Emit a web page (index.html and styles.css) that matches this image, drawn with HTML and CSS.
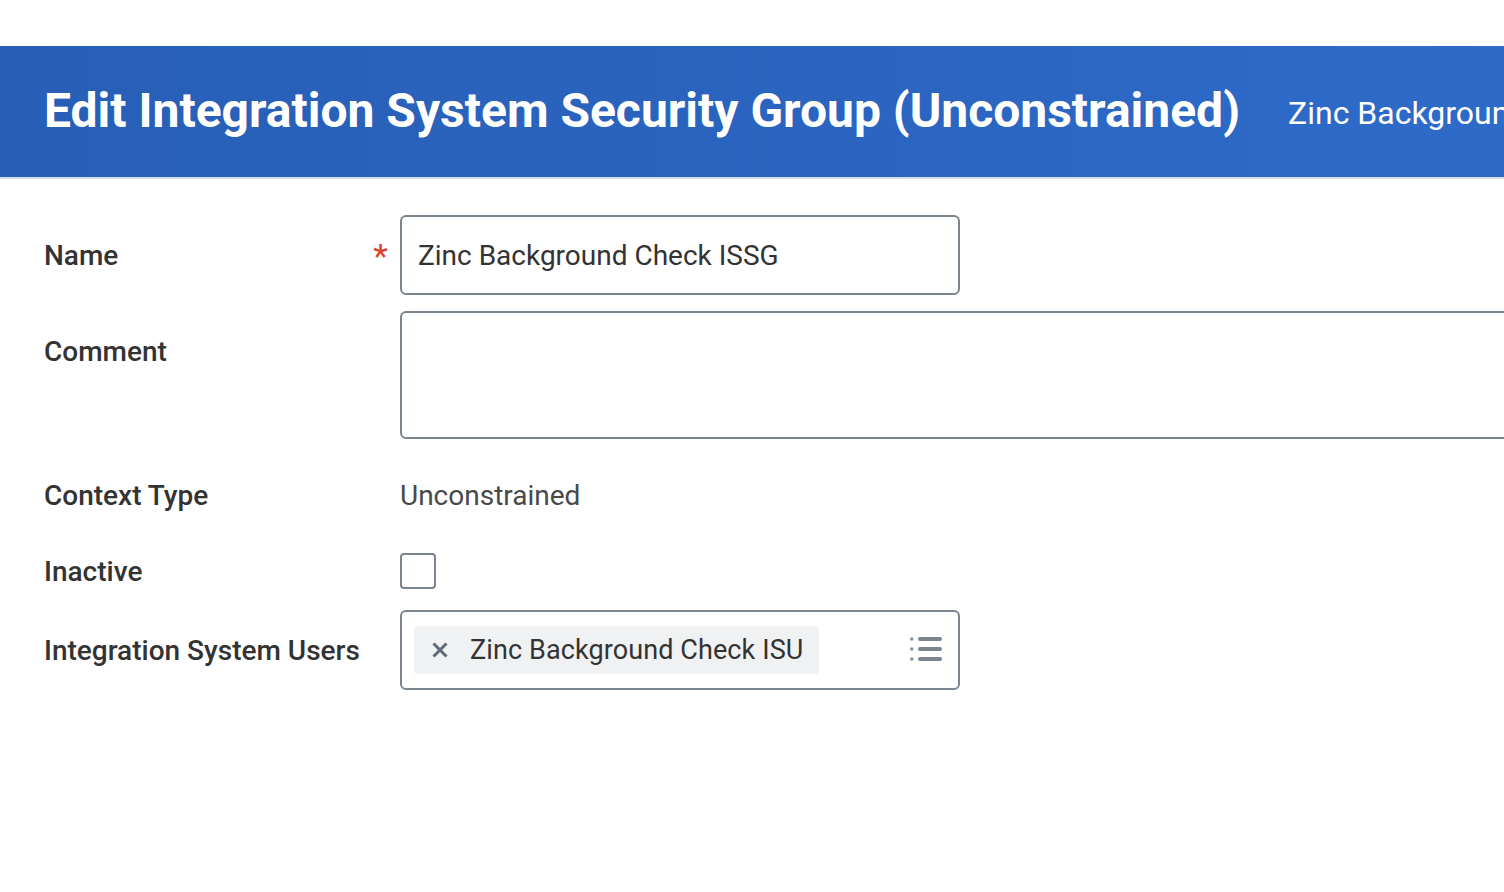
FILE: index.html
```html
<!DOCTYPE html>
<html lang="en">
<head>
    <meta charset="UTF-8">
    <meta name="viewport" content="width=device-width, initial-scale=1.0">
    <title>Edit Integration System Security Group (Unconstrained)</title>
    <link rel="stylesheet" href="styles.css">
</head>
<body>
    <div class="page-header">
        <h1>Edit Integration System Security Group (Unconstrained)</h1>
        <span class="header-sub">Zinc Background Check ISSG</span>
    </div>

    <form class="edit-form">
        <div class="row row-name">
            <label class="label">Name <span class="required">*</span></label>
            <div class="field">
                <div class="text-input">Zinc Background Check ISSG</div>
            </div>
        </div>

        <div class="row row-comment">
            <label class="label">Comment</label>
            <div class="field field-wide">
                <div class="textarea"></div>
            </div>
        </div>

        <div class="row row-context">
            <label class="label">Context Type</label>
            <div class="field value">Unconstrained</div>
        </div>

        <div class="row row-inactive">
            <label class="label">Inactive</label>
            <div class="field">
                <span class="checkbox"></span>
            </div>
        </div>

        <div class="row row-isu">
            <label class="label">Integration System Users</label>
            <div class="field">
                <div class="multi-select">
                    <span class="pill">
                        <svg class="pill-x" width="16" height="16" viewBox="0 0 16 16">
                            <path d="M1.5 1.5 L14.5 14.5 M14.5 1.5 L1.5 14.5" stroke="#5f6b78" stroke-width="3"/>
                        </svg>
                        Zinc Background Check ISU
                    </span>
                    <svg class="list-icon" width="32" height="24" viewBox="0 0 32 24">
                        <circle cx="1.8" cy="2" r="1.8" fill="#8a939c"/>
                        <circle cx="1.8" cy="12" r="1.8" fill="#8a939c"/>
                        <circle cx="1.8" cy="22" r="1.8" fill="#8a939c"/>
                        <rect x="8" y="0" width="24" height="4" rx="2" fill="#7b858f"/>
                        <rect x="8" y="10" width="24" height="4" rx="2" fill="#7b858f"/>
                        <rect x="8" y="20" width="24" height="4" rx="2" fill="#7b858f"/>
                    </svg>
                </div>
            </div>
        </div>
    </form>
</body>
</html>
```

FILE: styles.css
```css
body {
    margin: 0;
    padding-top: 46px;
    font-family: Roboto, "Liberation Sans", Arial, sans-serif;
    color: #333;
    background-color: #fff;
    overflow: hidden;
}

.page-header {
    display: flex;
    align-items: center;
    height: 131px;
    padding-left: 44px;
    background: linear-gradient(90deg, #285eb6 0%, #2b65c1 60%, #2e6bc9 100%);
    border-bottom: 2px solid #d3dff0;
    white-space: nowrap;
    overflow: hidden;
}
.page-header h1 {
    margin: 0;
    margin-top: -2px;
    font-size: 48px;
    font-weight: 700;
    color: #fff;
}
.header-sub {
    margin-left: 48px;
    margin-top: 2px;
    font-size: 32px;
    color: #fff;
}

.edit-form {
    display: flex;
    flex-direction: column;
    padding-left: 44px;
    padding-top: 36px;
}
.row {
    display: flex;
    align-items: center;
}
.label {
    display: flex;
    justify-content: space-between;
    align-items: center;
    width: 356px;
    flex-shrink: 0;
    font-size: 28px;
    font-weight: 500;
    color: #333;
}
.required {
    color: #d9402b;
    font-size: 34px;
    font-weight: 400;
    margin-right: 12px;
    margin-top: 2px;
}
.field {
    display: flex;
    align-items: center;
}
.field-wide {
    flex: 1;
}

.row-name {
    height: 80px;
}
.text-input {
    box-sizing: border-box;
    width: 560px;
    height: 80px;
    padding-left: 16px;
    display: flex;
    align-items: center;
    font-size: 28px;
    color: #333;
    border: 2px solid #7b858f;
    border-radius: 6px;
}

.row-comment {
    margin-top: 16px;
    align-items: flex-start;
}
.row-comment .label {
    height: 80px;
}
.textarea {
    box-sizing: border-box;
    width: 1200px;
    height: 128px;
    border: 2px solid #7b858f;
    border-radius: 6px;
}

.row-context {
    height: 112px;
}
.value {
    font-size: 28px;
    color: #494949;
}

.row-inactive {
    height: 40px;
}
.checkbox {
    box-sizing: border-box;
    width: 36px;
    height: 36px;
    border: 2px solid #7b858f;
    border-radius: 4px;
}

.row-isu {
    margin-top: 19px;
}
.multi-select {
    box-sizing: border-box;
    width: 560px;
    height: 80px;
    padding: 0 16px 0 12px;
    display: flex;
    align-items: center;
    justify-content: space-between;
    border: 2px solid #7b858f;
    border-radius: 6px;
}
.pill {
    display: flex;
    align-items: center;
    height: 48px;
    padding: 0 16px 0 18px;
    background-color: #f0f1f2;
    border-radius: 4px;
    font-size: 27px;
    color: #333;
    letter-spacing: 0.1px;
}
.pill-x {
    margin-right: 22px;
}
.list-icon {
    margin-top: -2px;
}
```
